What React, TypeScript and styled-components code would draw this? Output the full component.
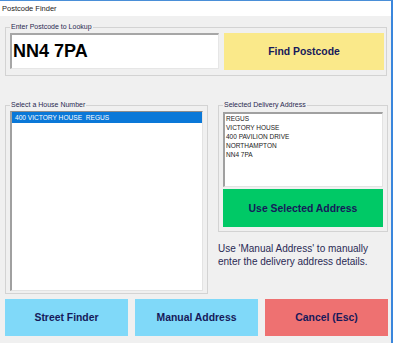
import React from 'react'
import styled, { createGlobalStyle } from 'styled-components'

const GlobalStyle = createGlobalStyle`
  body {
    margin: 0;
    background: #f0f0f0;
    font-family: "Liberation Sans", Arial, sans-serif;
  }
  * { box-sizing: border-box; }
`

const Window = styled.div`
  width: 393px;
  height: 343px;
  display: flex;
  flex-direction: column;
  background: #f0f0f0;
  border-top: 1px solid #4a8fd8;
  border-right: 2px solid #3a86dc;
  overflow: hidden;
`

const TitleBar = styled.div`
  height: 15px;
  background: #ffffff;
  display: flex;
  align-items: center;
  padding-left: 2px;
  font-size: 7.5px;
  color: #222;
`

const Body = styled.div`
  padding: 6px 0 0 5px;
  display: flex;
  flex-direction: column;
`

const Group = styled.fieldset<{ $w: number; $pad: string }>`
  margin: 0;
  min-width: 0;
  width: ${p => p.$w}px;
  padding: ${p => p.$pad};
  border: 1px solid #d3d3d3;
  display: flex;
  flex-direction: column;
  gap: 2px;
`

const Legend = styled.legend`
  font-size: 7px;
  line-height: 10px;
  padding: 0 1px;
  color: #2a2a50;
`

const LookupRow = styled.div`
  display: flex;
  gap: 5px;
  height: 37px;
`

const PostcodeInput = styled.input`
  width: 209px;
  height: 36px;
  margin: 0;
  padding: 0 0 0 1px;
  background: #fff;
  border-style: solid;
  border-width: 2px 1px 1px 2px;
  border-color: #a6a6a6 #e6e6e6 #e6e6e6 #a6a6a6;
  font-family: "Liberation Sans", Arial, sans-serif;
  font-weight: bold;
  font-size: 18px;
  color: #000;
  outline: none;
`

const ActionButton = styled.button<{ $bg: string; $w?: number; $h: number }>`
  flex: ${p => (p.$w ? 'none' : '1')};
  width: ${p => (p.$w ? `${p.$w}px` : 'auto')};
  height: ${p => p.$h}px;
  margin: 0;
  padding: 0;
  border: none;
  background: ${p => p.$bg};
  font-family: "Liberation Sans", Arial, sans-serif;
  font-weight: bold;
  font-size: 10.4px;
  color: #16195a;
  cursor: pointer;
`

const MiddleRow = styled.div`
  display: flex;
  gap: 10px;
  margin-top: 24px;
`

const ListBox = styled.div`
  width: 193px;
  height: 180px;
  background: #fff;
  border-style: solid;
  border-width: 1px 1px 1px 2px;
  border-color: #8c8c8c #e3e3e3 #e3e3e3 #a0a0a0;
`

const ListItem = styled.div<{ $selected?: boolean }>`
  height: 11px;
  line-height: 11px;
  padding-left: 3px;
  font-size: 6.6px;
  white-space: pre;
  background: ${p => (p.$selected ? '#0a78d8' : 'transparent')};
  color: ${p => (p.$selected ? '#fff' : '#000')};
`

const RightColumn = styled.div`
  width: 170px;
  display: flex;
  flex-direction: column;
`

const AddressBox = styled.div`
  height: 75px;
  background: #fff;
  padding: 0 0 0 1px;
  border-style: solid;
  border-width: 2px 1px 1px 2px;
  border-color: #a0a0a0 #e3e3e3 #e3e3e3 #a0a0a0;
`

const AddressLine = styled.div`
  font-size: 6.5px;
  line-height: 9px;
  color: #222;
`

const Note = styled.p`
  margin: 10px 0 0;
  font-size: 10px;
  line-height: 13px;
  color: #2a2a55;
`

const ButtonRow = styled.div`
  display: flex;
  gap: 7px;
  margin-top: 5px;
`

const address = ['REGUS', 'VICTORY HOUSE', '400 PAVILION DRIVE', 'NORTHAMPTON', 'NN4 7PA']

export default function App() {
  return (
    <>
      <GlobalStyle />
      <Window>
        <TitleBar>Postcode Finder</TitleBar>
        <Body>
          <Group $w={382} $pad="1px 2px 5px 4px">
            <Legend>Enter Postcode to Lookup</Legend>
            <LookupRow>
              <PostcodeInput readOnly value="NN4 7PA" />
              <ActionButton $bg="#fae98a" $h={37}>Find Postcode</ActionButton>
            </LookupRow>
          </Group>

          <MiddleRow>
            <Group $w={203} $pad="1px 4px 2px 4px">
              <Legend>Select a House Number</Legend>
              <ListBox>
                <ListItem $selected>{'400 VICTORY HOUSE  REGUS'}</ListItem>
              </ListBox>
            </Group>

            <RightColumn>
              <Group $w={170} $pad="2px 4px 4px 4px">
                <Legend>Selected Delivery Address</Legend>
                <AddressBox>
                  {address.map(line => (
                    <AddressLine key={line}>{line}</AddressLine>
                  ))}
                </AddressBox>
                <ActionButton $bg="#00c966" $h={38} style={{ flex: 'none' }}>
                  Use Selected Address
                </ActionButton>
              </Group>
              <Note>
                Use 'Manual Address' to manually
                <br />
                enter the delivery address details.
              </Note>
            </RightColumn>
          </MiddleRow>

          <ButtonRow>
            <ActionButton $bg="#80d9f9" $w={123} $h={37}>Street Finder</ActionButton>
            <ActionButton $bg="#80d9f9" $w={123} $h={37}>Manual Address</ActionButton>
            <ActionButton $bg="#ee7171" $w={123} $h={37}>Cancel (Esc)</ActionButton>
          </ButtonRow>
        </Body>
      </Window>
    </>
  )
}
